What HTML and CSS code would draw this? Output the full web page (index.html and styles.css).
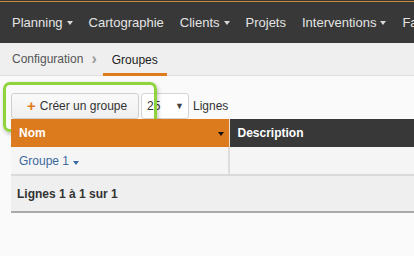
FILE: index.html
```html
<!DOCTYPE html>
<html lang="fr">
<head>
<meta charset="utf-8">
<title>Groupes</title>
<link rel="stylesheet" href="styles.css">
</head>
<body>
<nav class="navbar">
  <ul class="nav">
    <li class="nav-item">Planning<span class="caret"></span></li>
    <li class="nav-item">Cartographie</li>
    <li class="nav-item">Clients<span class="caret"></span></li>
    <li class="nav-item">Projets</li>
    <li class="nav-item">Interventions<span class="caret"></span></li>
    <li class="nav-item">Facturation</li>
  </ul>
</nav>
<div class="crumbs">
  <span class="crumb">Configuration</span>
  <span class="sep">›</span>
  <span class="crumb active">Groupes</span>
</div>
<main class="content">
  <div class="toolbar">
    <button class="btn"><span class="plus">+</span>Créer un groupe</button>
    <div class="select"><span>25</span><span class="arrow">▼</span></div>
    <span class="lines">Lignes</span>
    <div class="highlight"></div>
  </div>
  <table class="grid">
    <thead>
      <tr>
        <th class="col-nom">Nom<span class="caret dark"></span></th>
        <th class="col-desc">Description</th>
      </tr>
    </thead>
    <tbody>
      <tr>
        <td class="col-nom"><a class="link">Groupe 1<span class="caret blue"></span></a></td>
        <td class="col-desc"></td>
      </tr>
    </tbody>
  </table>
  <div class="footer">Lignes 1 à 1 sur 1</div>
</main>
</body>
</html>
```
FILE: styles.css
```css
* { box-sizing: border-box; }
html, body { margin: 0; padding: 0; }
body {
  width: 414px;
  height: 256px;
  overflow: hidden;
  background: #fafafa;
  font-family: "Liberation Sans", Arial, sans-serif;
  font-size: 12px;
  color: #333;
}
.navbar {
  height: 43px;
  background: #383838;
  border-top: 1px solid #383838;
  overflow: hidden;
}
.navbar::before {
  content: "";
  display: block;
  height: 1px;
  background: #c98a3c;
}
.nav {
  list-style: none;
  margin: 0;
  padding: 0 0 0 4px;
  display: flex;
  white-space: nowrap;
  height: 41px;
  align-items: center;
}
.nav-item {
  flex: none;
  padding: 0 8px;
  color: #e4e4e4;
  font-size: 13px;
  display: flex;
  align-items: center;
}
.caret {
  display: inline-block;
  width: 0;
  height: 0;
  margin-left: 4px;
  border-left: 3.5px solid transparent;
  border-right: 3.5px solid transparent;
  border-top: 4px solid #d8d8d8;
}
.caret.dark { border-top-color: #111; }
.caret.blue { border-top-color: #3b6aa0; margin-left: 4px; }
.crumbs {
  height: 33px;
  background: #efefef;
  border-bottom: 1px solid #dedede;
  display: flex;
  align-items: center;
  padding-left: 12px;
}
.crumb { color: #555; font-size: 12px; }
.sep {
  color: #999;
  font-weight: bold;
  font-size: 16px;
  margin: 0 6px 0 8px;
}
.crumb.active {
  color: #222;
  padding: 0 9px;
  height: 32px;
  line-height: 33px;
  border-bottom: 3px solid #e07b1c;
  margin-top: 1px;
}
.content { padding: 0 0 0 11px; }
.toolbar {
  position: relative;
  display: flex;
  align-items: center;
  height: 43px;
  padding-top: 16px;
}
.btn {
  height: 26px;
  width: 128px;
  padding: 0 0 0 15px;
  border: 1px solid #cfcfcf;
  border-radius: 3px;
  background: linear-gradient(#fafafa, #efefef);
  font-family: inherit;
  font-size: 12px;
  color: #333;
  display: flex;
  align-items: center;
}
.plus {
  color: #e07b1c;
  font-weight: bold;
  font-size: 15px;
  margin-right: 4px;
  line-height: 1;
}
.select {
  margin-left: 2px;
  width: 48px;
  height: 26px;
  border: 1px solid #d4d4d4;
  border-radius: 3px;
  background: #fff;
  display: flex;
  align-items: center;
  justify-content: space-between;
  padding: 0 4px 0 5px;
  font-size: 12px;
  color: #333;
}
.arrow { font-size: 9px; color: #444; }
.lines { margin-left: 4px; font-size: 12px; color: #333; }
.highlight {
  position: absolute;
  left: -8px;
  top: 6px;
  width: 154px;
  height: 50px;
  border: 3px solid #8fd43c;
  border-radius: 7px;
  box-shadow: 1px 2px 4px rgba(0,0,0,0.25);
  pointer-events: none;
}
.grid {
  width: 403px;
  border-collapse: collapse;
  table-layout: fixed;
}
.grid th {
  height: 28px;
  text-align: left;
  font-weight: bold;
  font-size: 12px;
  color: #fff;
  padding: 0 0 0 8px;
}
.grid th.col-nom {
  width: 218px;
  background: #dc7a1e;
  border-right: 1px solid #f0e0d0;
  position: relative;
}
.grid th.col-nom .caret {
  position: absolute;
  right: 5px;
  top: 13px;
}
.grid th.col-desc { background: #383838; padding-left: 8px; }
.grid td {
  height: 28px;
  background: #f5f5f5;
  border-bottom: 2px solid #dadada;
  padding: 0 0 0 8px;
}
.grid td.col-nom { border-right: 2px solid #dedede; }
.link { color: #3b6aa0; font-size: 12px; }
.footer {
  height: 37px;
  background: #efefef;
  border-bottom: 2px solid #aaa;
  font-weight: bold;
  font-size: 12px;
  color: #333;
  padding-left: 6px;
  display: flex;
  align-items: center;
}
```
